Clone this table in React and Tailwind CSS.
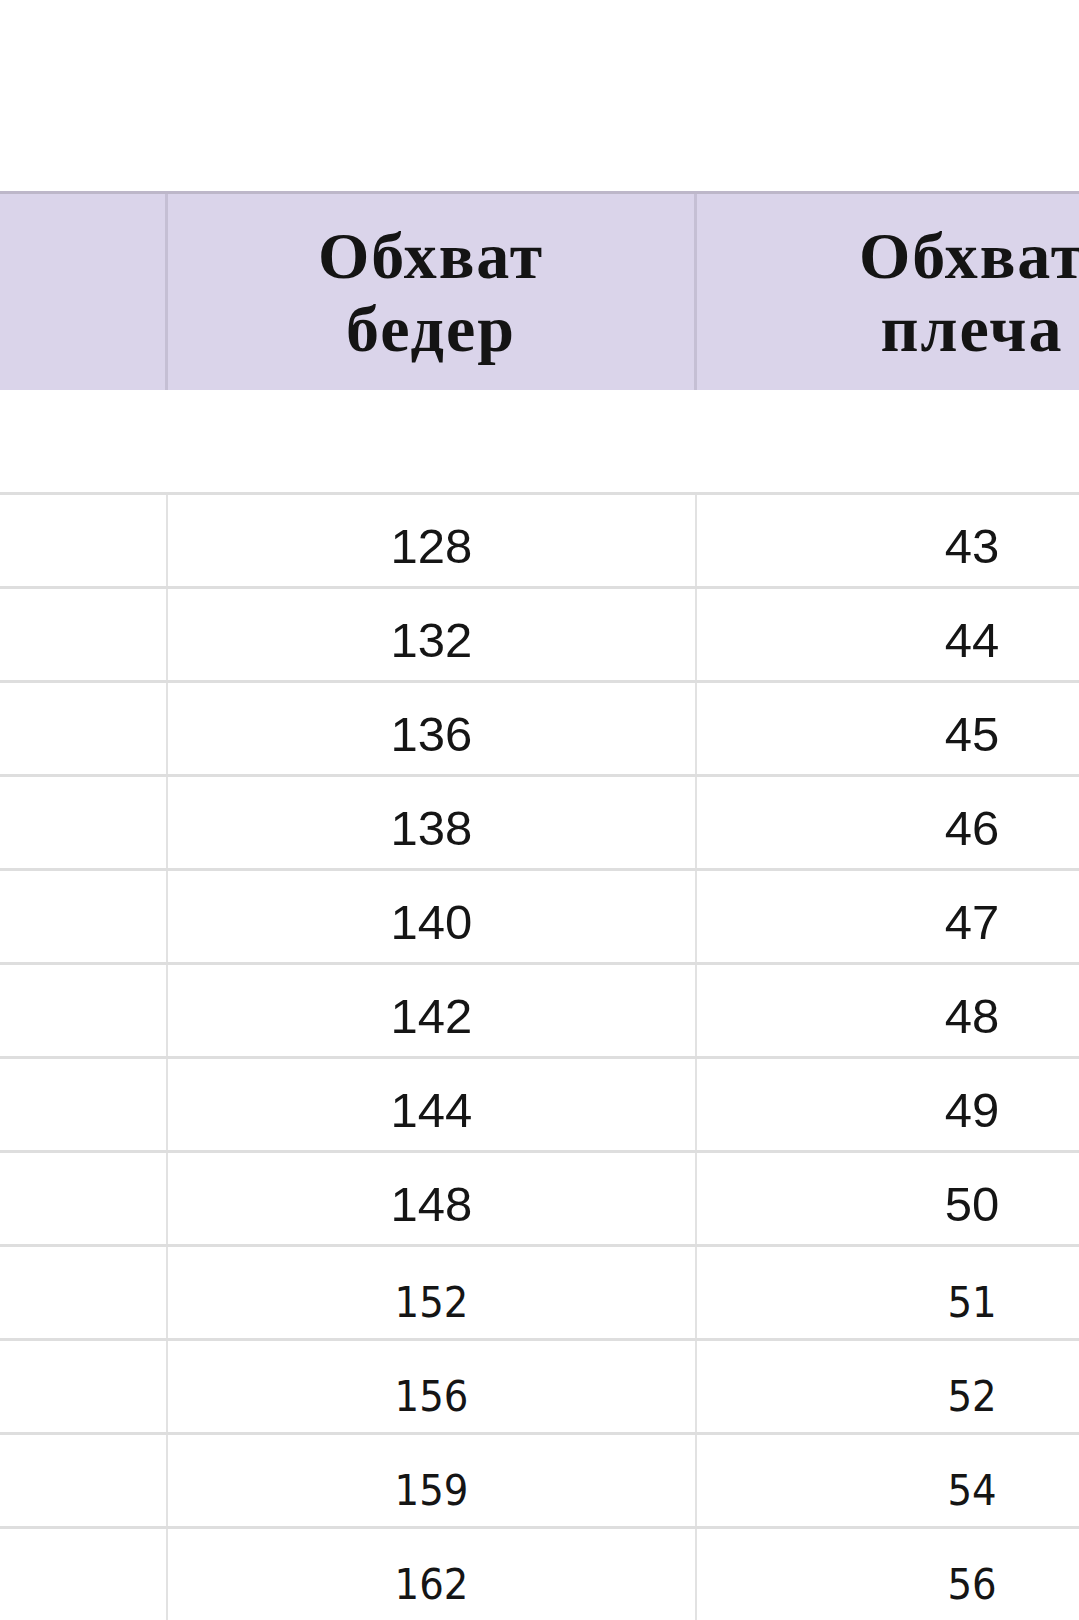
import React from 'react';

const rows = [
  ['128', '43'],
  ['132', '44'],
  ['136', '45'],
  ['138', '46'],
  ['140', '47'],
  ['142', '48'],
  ['144', '49'],
  ['148', '50'],
  ['152', '51', true],
  ['156', '52', true],
  ['159', '54', true],
  ['162', '56', true],
];

const serif = { fontFamily: '"Liberation Serif", "Times New Roman", serif' };

function HeadCell({ children, className = '' }) {
  return (
    <div
      className={`flex items-center justify-center text-center font-bold text-[66px] leading-[73px] tracking-[2px] text-[#141414] ${className}`}
      style={serif}
    >
      <div>{children}</div>
    </div>
  );
}

function Row({ hips, shoulder, alt }) {
  // last rows in the sheet use a narrower font
  const font = alt
    ? 'font-["DejaVu_Sans_Condensed","DejaVu_Sans",sans-serif] text-[43px] pt-[20px]'
    : 'font-["Liberation_Sans",Arial,sans-serif] text-[49px] pt-[12px]';
  return (
    <div className="flex h-[94px] border-t-[3px] border-[#dedede]">
      <div className="w-[168px] shrink-0 border-r-2 border-[#e2e2e2]" />
      <div className={`w-[529px] shrink-0 flex items-center justify-center border-r-2 border-[#e2e2e2] text-[#151515] ${font}`}>
        {hips}
      </div>
      <div className={`w-[550px] shrink-0 flex items-center justify-center text-[#151515] ${font}`}>
        {shoulder}
      </div>
    </div>
  );
}

export default function App() {
  return (
    <div className="w-[1079px] h-[1620px] overflow-hidden bg-white pt-[191px]">
      <div className="w-[1247px]">
        <div className="h-[3px] bg-[#bdb7c9]" />
        <div className="flex h-[196px] bg-[#dad4ea]">
          <div className="w-[168px] shrink-0 border-r-[3px] border-[#c5bfd4]" />
          <HeadCell className="w-[529px] shrink-0 border-r-[3px] border-[#c5bfd4]">
            Обхват<br />бедер
          </HeadCell>
          <HeadCell className="w-[550px] shrink-0">
            Обхват<br />плеча
          </HeadCell>
        </div>
        <div className="h-[102px] bg-white" />
        {rows.map(([h, s, alt]) => (
          <Row key={h} hips={h} shoulder={s} alt={alt} />
        ))}
      </div>
    </div>
  );
}
